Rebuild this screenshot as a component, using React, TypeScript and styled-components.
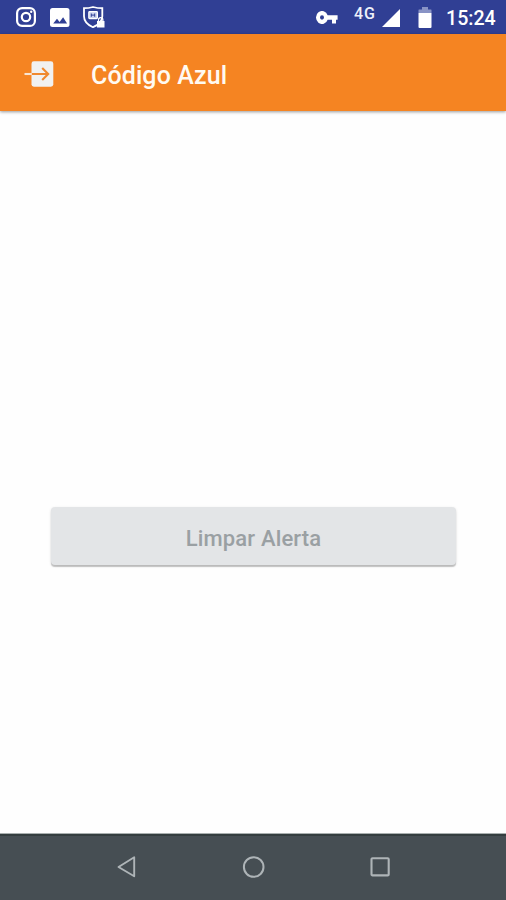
import React from "react";
import styled, { createGlobalStyle } from "styled-components";

const GlobalStyle = createGlobalStyle`
  * { box-sizing: border-box; }
  body { margin: 0; background: #fff; font-family: Roboto, sans-serif; }
`;

const Screen = styled.div`
  display: flex;
  flex-direction: column;
  width: 506px;
  height: 900px;
  overflow: hidden;
  background: #fefefe;
`;

const StatusBar = styled.header`
  display: flex;
  justify-content: space-between;
  flex: 0 0 34px;
  padding: 0 10px 0 16px;
  background: #303f94;
  color: #fff;
`;

const StatusGroup = styled.div`
  display: flex;
  align-items: flex-start;
`;

const Icon = styled.svg<{ $top?: number; $left?: number }>`
  display: block;
  flex: none;
  margin-top: ${(p) => p.$top ?? 0}px;
  margin-left: ${(p) => p.$left ?? 0}px;
`;

const NetworkLabel = styled.span`
  width: 22px;
  margin: 5px 0 0 16px;
  font-size: 16px;
  font-weight: 500;
  line-height: 17px;
  letter-spacing: 0.9px;
  color: #eef0fa;
`;

const Clock = styled.time`
  width: 50px;
  margin: 7px 0 0 14px;
  font-size: 19.6px;
  font-weight: 500;
  line-height: 24px;
  white-space: nowrap;
`;

const AppBar = styled.div`
  display: flex;
  align-items: center;
  flex: 0 0 77px;
  padding-left: 24px;
  background: #f58422;
  box-shadow: 0 1px 3px rgba(0, 0, 0, 0.4);
`;

const ExitButton = styled.button`
  padding: 0;
  margin: 2px 37px 0 0;
  border: 0;
  background: none;
`;

const Title = styled.h1`
  margin: 7px 0 0;
  font-size: 25px;
  font-weight: 500;
  line-height: 32px;
  letter-spacing: 0.1px;
  color: #fffaf2;
  white-space: nowrap;
`;

const Content = styled.main`
  flex: 1;
  padding: 396px 50px 0 51px;
`;

const AlertButton = styled.button`
  display: flex;
  align-items: center;
  justify-content: center;
  width: 100%;
  height: 58px;
  padding: 6px 0 0;
  border: 0;
  border-radius: 4px;
  background: #e3e5e7;
  box-shadow: 0 2px 1px rgba(0, 0, 0, 0.2), 0 1px 3px rgba(0, 0, 0, 0.12);
  font: 500 22px/28px Roboto, sans-serif;
  letter-spacing: 0.16px;
  color: #9aa0a3;
`;

const NavBar = styled.nav`
  display: flex;
  justify-content: center;
  gap: 102px;
  flex: 0 0 67px;
  padding: 21px 0 0 1px;
  border-top: 1px solid #a9afaf;
  background: #464e53;
  box-shadow: inset 0 2px 0 #343d3f;
`;

const NavButton = styled.button`
  width: 24px;
  height: 24px;
  padding: 0;
  border: 0;
  background: none;
`;

export default function App() {
  return (
    <>
      <GlobalStyle />
      <Screen>
        <StatusBar>
          <StatusGroup>
            <Icon $top={7} width="20" height="20" fill="none" stroke="#fff" strokeWidth="2.2">
              <rect x="1.1" y="1.1" width="17.8" height="17.8" rx="5" />
              <circle cx="10" cy="10" r="4.2" />
              <circle cx="15.2" cy="4.8" r="1.2" fill="#fff" stroke="none" />
            </Icon>
            <Icon $top={8} $left={14} width="20" height="19">
              <rect width="19.5" height="19" rx="2.5" fill="#fff" />
              <path d="M3.2 15.5 7 10.7l2.6 3.2 3.5-4.6 4 6.2z" fill="#303f94" />
            </Icon>
            <Icon $top={6} $left={13} width="22" height="22" fill="none" stroke="#fff">
              <path d="M1 2.2Q5.5 2.2 10 1q4.8 1.2 9.3 1.2v8q0 7-9.3 11Q1 17.2 1 10.2z" strokeWidth="1.8" />
              <rect x="5.8" y="5.6" width="8.6" height="7" rx=".8" fill="#cbd3ef" strokeWidth="1.2" />
              <path d="M8.3 7.5v3.3M11.7 7.5v3.3M8.3 9.1h3.4" stroke="#303f94" strokeWidth="1" />
              <rect x="14" y="15" width="7.5" height="6.5" fill="#fff" stroke="none" />
              <path d="M15.5 15v-1.2a2.2 2.2 0 0 1 4.4 0V15" strokeWidth="1.2" />
            </Icon>
          </StatusGroup>
          <StatusGroup>
            <Icon $top={11} width="22" height="13" viewBox="1 6 22 12" preserveAspectRatio="none">
              <path d="M12.65 10A6 6 0 1 0 12.65 14H17v3.6h4V14h1.6v-4zM7 14a2 2 0 1 1 0-4 2 2 0 0 1 0 4z" fill="#fff" />
            </Icon>
            <NetworkLabel>4G</NetworkLabel>
            <Icon $top={9} $left={6} width="18" height="18">
              <path d="M18 0v18H0z" fill="#fff" />
            </Icon>
            <Icon $top={7} $left={18} width="14" height="21">
              <path d="M4 0h6v2.5h3q.5 0 .5.7V6H.5V3.2q0-.7.5-.7h3z" fill="#8993c5" />
              <path d="M.5 6h13v14q0 1-1 1h-11q-1 0-1-1z" fill="#fff" />
            </Icon>
            <Clock>15:24</Clock>
          </StatusGroup>
        </StatusBar>
        <AppBar>
          <ExitButton aria-label="Sair">
            <Icon width="30" height="26">
              <rect x="7.5" y="0.3" width="21.8" height="25.4" rx="2.4" fill="#f1f1f1" />
              <path d="M7.5 13H24M18.2 7l6 6-6 6" fill="none" stroke="#f0892f" strokeWidth="2.1" />
              <path d="M.5 13h7.3" stroke="#f8e4d2" strokeWidth="2.1" />
            </Icon>
          </ExitButton>
          <Title>Código Azul</Title>
        </AppBar>
        <Content>
          <AlertButton>Limpar Alerta</AlertButton>
        </Content>
        <NavBar>
          <NavButton aria-label="Voltar">
            <Icon width="24" height="24" fill="none" stroke="#aeb4b7" strokeWidth="1.9">
              <path d="M18.2 2.2v19L2.5 12z" strokeLinejoin="round" />
            </Icon>
          </NavButton>
          <NavButton aria-label="Início">
            <Icon width="24" height="24" fill="none" stroke="#aeb4b7" strokeWidth="2">
              <circle cx="11.7" cy="12" r="9.8" />
            </Icon>
          </NavButton>
          <NavButton aria-label="Recentes">
            <Icon width="24" height="24" fill="none" stroke="#aeb4b7" strokeWidth="2.1">
              <rect x="3.5" y="3.2" width="17.2" height="17.2" rx="1" />
            </Icon>
          </NavButton>
        </NavBar>
      </Screen>
    </>
  );
}
